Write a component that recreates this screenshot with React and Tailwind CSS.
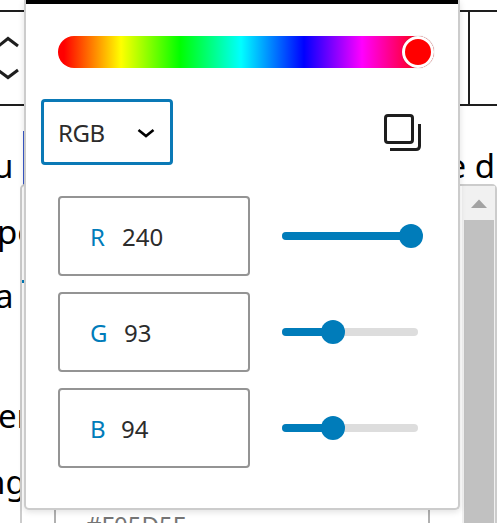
const channels = [
  { label: 'R', value: 240, position: 129, gap: 'ml-[17px]' },
  { label: 'G', value: 93, position: 51, gap: 'ml-[19px]' },
  { label: 'B', value: 94, position: 51, gap: 'ml-4' },
];

function EditorToolbar() {
  return (
    <div className="mt-[10px] flex h-24 justify-between border-y-2 border-[#1e1e1e]">
      <svg className="mt-6 h-[46px] w-5" viewBox="0 0 20 46" fill="none" stroke="#1e1e1e" strokeWidth="3">
        <path d="M-2 10.5L8 2.5L18 10" />
        <path d="M-2 34L8 41.5L18 34" />
      </svg>
      <div className="w-[29px] border-l-2 border-[#1e1e1e]" />
    </div>
  );
}

function DocumentText() {
  return (
    <div className="text-[33px] leading-[66px] text-black">
      <div className="mt-[27px] flex h-[66px] justify-between">
        <span className="-ml-[7px]">u</span>
        <span className="mr-[2px]">e d</span>
      </div>
      <div className="-ml-[3px] h-[64px]">pe</div>
      <div className="-ml-[5px] h-[120px]">a</div>
      <div className="-ml-[2px] h-[66px]">en</div>
      <div className="-ml-[15px] h-[66px]">ng</div>
    </div>
  );
}

function SidePanel() {
  return (
    <div className="absolute left-5 top-[184px] flex h-[360px] w-[477px] rounded-[5px] border-2 border-[#ccc] bg-white">
      <div className="mt-[94px] h-[3px] w-[3px] bg-[#007cba]" />
      <div className="ml-auto mr-8 mt-[300px] h-[66px] w-[376px] border-2 border-[#b0b0b0] pl-[30px] text-2xl leading-[74px] text-[#757575]">
        #F05D5E
      </div>
      <div className="flex w-[33px] flex-col bg-[#f1f1f1] pl-[2px] pr-px">
        <svg className="h-[34px] w-full shrink-0" viewBox="0 0 30 34">
          <path d="M7 22L15 13.5L23 22Z" fill="#a3a3a3" />
        </svg>
        <div className="grow bg-[#c1c1c1]" />
      </div>
    </div>
  );
}

function Channel({ label, value, position, gap }) {
  return (
    <div className="flex items-center">
      <div className="flex h-20 w-48 items-center rounded-[4px] border-2 border-[#949494] pb-px pl-[30px] pt-[3px] text-2xl">
        <span className="w-[15px] text-[#007cba]">{label}</span>
        <span className={`${gap} text-[#2c2c2c]`}>{value}</span>
      </div>
      <div className="relative ml-8 h-2 w-[136px] rounded-full bg-[#ddd]">
        <div className="h-2 rounded-full bg-[#007cba]" style={{ width: position }} />
        <div
          className="absolute -top-2 h-6 w-6 -translate-x-1/2 rounded-full bg-[#007cba]"
          style={{ left: position }}
        />
      </div>
    </div>
  );
}

function ColorPopover() {
  return (
    <div className="absolute left-6 top-0 h-[510px] w-[436px] rounded-b-[5px] border-x-2 border-b-2 border-[#ccc] bg-white shadow-[0_2px_6px_rgba(0,0,0,0.12)]">
      <div className="h-1 bg-black" />
      <div className="relative ml-8 mt-8 h-8 w-[376px] rounded-full bg-[linear-gradient(to_right,#f00_6px,#ff0_63px,#0f0_122px,#0ff_183px,#00f_246px,#f0f_304px,#f00_365px)]">
        <div className="absolute left-[344px] top-0 h-8 w-8 rounded-full border-[3px] border-white bg-[#f00] shadow-[0_0_1px_rgba(0,0,0,0.4)]" />
      </div>
      <div className="ml-[15px] mr-[37px] mt-[31px] flex items-center justify-between">
        <button className="flex h-[66px] w-[132px] items-center justify-between rounded-[4px] border-[3px] border-[#0a79b6] pl-[14px] pr-[15px] pt-px text-2xl text-[#2c2c2c]">
          <span className="tracking-[-0.4px]">RGB</span>
          <svg className="h-3 w-[18px]" viewBox="0 0 18 12" fill="none" stroke="#000" strokeWidth="2.6">
            <path d="M1.5 3L9 9L16.5 3" />
          </svg>
        </button>
        <svg className="h-[38px] w-[38px]" viewBox="0 0 38 38" fill="none" stroke="#1e1e1e" strokeWidth="3">
          <rect x="2.5" y="2.5" width="27" height="27" rx="2.5" />
          <path d="M7 36.5H33Q36.5 36.5 36.5 33V11" />
        </svg>
      </div>
      <div className="ml-8 mt-[31px] flex flex-col gap-4">
        {channels.map((channel) => (
          <Channel key={channel.label} {...channel} />
        ))}
      </div>
    </div>
  );
}

export default function App() {
  return (
    <div className="relative flow-root h-[523px] w-[497px] overflow-hidden bg-white font-['Noto_Sans','Open_Sans',sans-serif]">
      <EditorToolbar />
      <DocumentText />
      <div className="absolute left-[23px] top-[131px] h-[54px] w-0.5 bg-[#3858c9]" />
      <SidePanel />
      <ColorPopover />
    </div>
  );
}
